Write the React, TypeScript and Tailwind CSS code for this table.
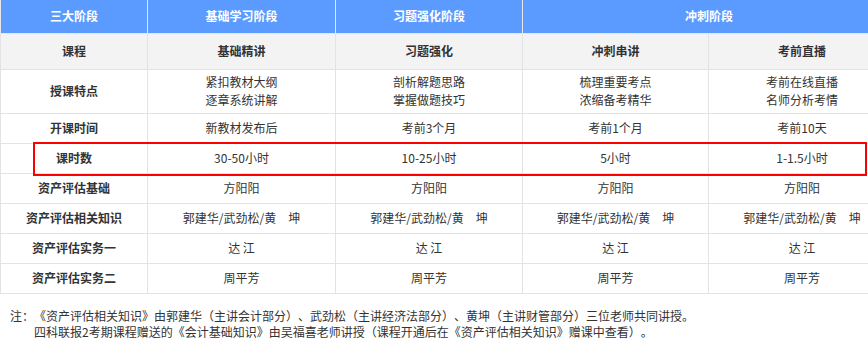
const COLS = ["w-[147px]", "w-[188px]", "w-[187px]", "w-[186px]", "w-[187px]"];

const ROWS: { label: string; cells: string[] }[] = [
  { label: "开课时间", cells: ["新教材发布后", "考前3个月", "考前1个月", "考前10天"] },
  { label: "课时数", cells: ["30-50小时", "10-25小时", "5小时", "1-1.5小时"] },
  { label: "资产评估基础", cells: ["方阳阳", "方阳阳", "方阳阳", "方阳阳"] },
  {
    label: "资产评估相关知识",
    cells: ["郭建华/武劲松/黄　坤", "郭建华/武劲松/黄　坤", "郭建华/武劲松/黄　坤", "郭建华/武劲松/黄　坤"],
  },
  { label: "资产评估实务一", cells: ["达 江", "达 江", "达 江", "达 江"] },
  { label: "资产评估实务二", cells: ["周平芳", "周平芳", "周平芳", "周平芳"] },
];

const td = "border border-[#e3e3e3] text-center align-middle p-0";

export default function App() {
  return (
    <div className="relative w-[868px] h-[343px] overflow-hidden bg-white text-[12px] text-[#333] font-['Noto_Sans_CJK_SC','Microsoft_YaHei',sans-serif] [text-spacing-trim:space-all]">
      <table className="table-fixed border-collapse w-[895px] -mt-px">
        <colgroup>
          {COLS.map((c) => (
            <col key={c} className={c} />
          ))}
        </colgroup>
        <tbody>
          <tr className="h-[34px] bg-[#5b9bff] text-white font-bold">
            <td className={`${td} border-[#e6e6e6] border-t-0`}>三大阶段</td>
            <td className={`${td} border-[#e6e6e6] border-t-0`}>基础学习阶段</td>
            <td className={`${td} border-[#e6e6e6] border-t-0`}>习题强化阶段</td>
            <td className={`${td} border-[#e6e6e6] border-t-0`} colSpan={2}>
              冲刺阶段
            </td>
          </tr>
          <tr className="h-[36px] bg-[#f3f3f3] font-bold">
            <td className={td}>课程</td>
            <td className={td}>基础精讲</td>
            <td className={td}>习题强化</td>
            <td className={td}>冲刺串讲</td>
            <td className={td}>考前直播</td>
          </tr>
          <tr className="h-[44px] leading-[18px]">
            <td className={`${td} font-bold`}>授课特点</td>
            <td className={td}>
              紧扣教材大纲
              <br />
              逐章系统讲解
            </td>
            <td className={td}>
              剖析解题思路
              <br />
              掌握做题技巧
            </td>
            <td className={td}>
              梳理重要考点
              <br />
              浓缩备考精华
            </td>
            <td className={td}>
              考前在线直播
              <br />
              名师分析考情
            </td>
          </tr>
          {ROWS.map((r) => (
            <tr key={r.label} className="h-[30px]">
              <td className={`${td} font-bold`}>{r.label}</td>
              {r.cells.map((c, i) => (
                <td key={i} className={`${td} whitespace-pre`}>
                  {c}
                </td>
              ))}
            </tr>
          ))}
        </tbody>
      </table>

      <div className="absolute left-[33px] top-[142px] w-[834px] h-[34px] border-2 border-[#f00]" />

      <div className="mt-[14px] pl-[10px] leading-[16px]">
        <p>注：《资产评估相关知识》由郭建华（主讲会计部分）、武劲松（主讲经济法部分）、黄坤（主讲财管部分）三位老师共同讲授。</p>
        <p className="pl-[24px]">四科联报2考期课程赠送的《会计基础知识》由吴福喜老师讲授（课程开通后在《资产评估相关知识》赠课中查看）。</p>
      </div>
    </div>
  );
}
